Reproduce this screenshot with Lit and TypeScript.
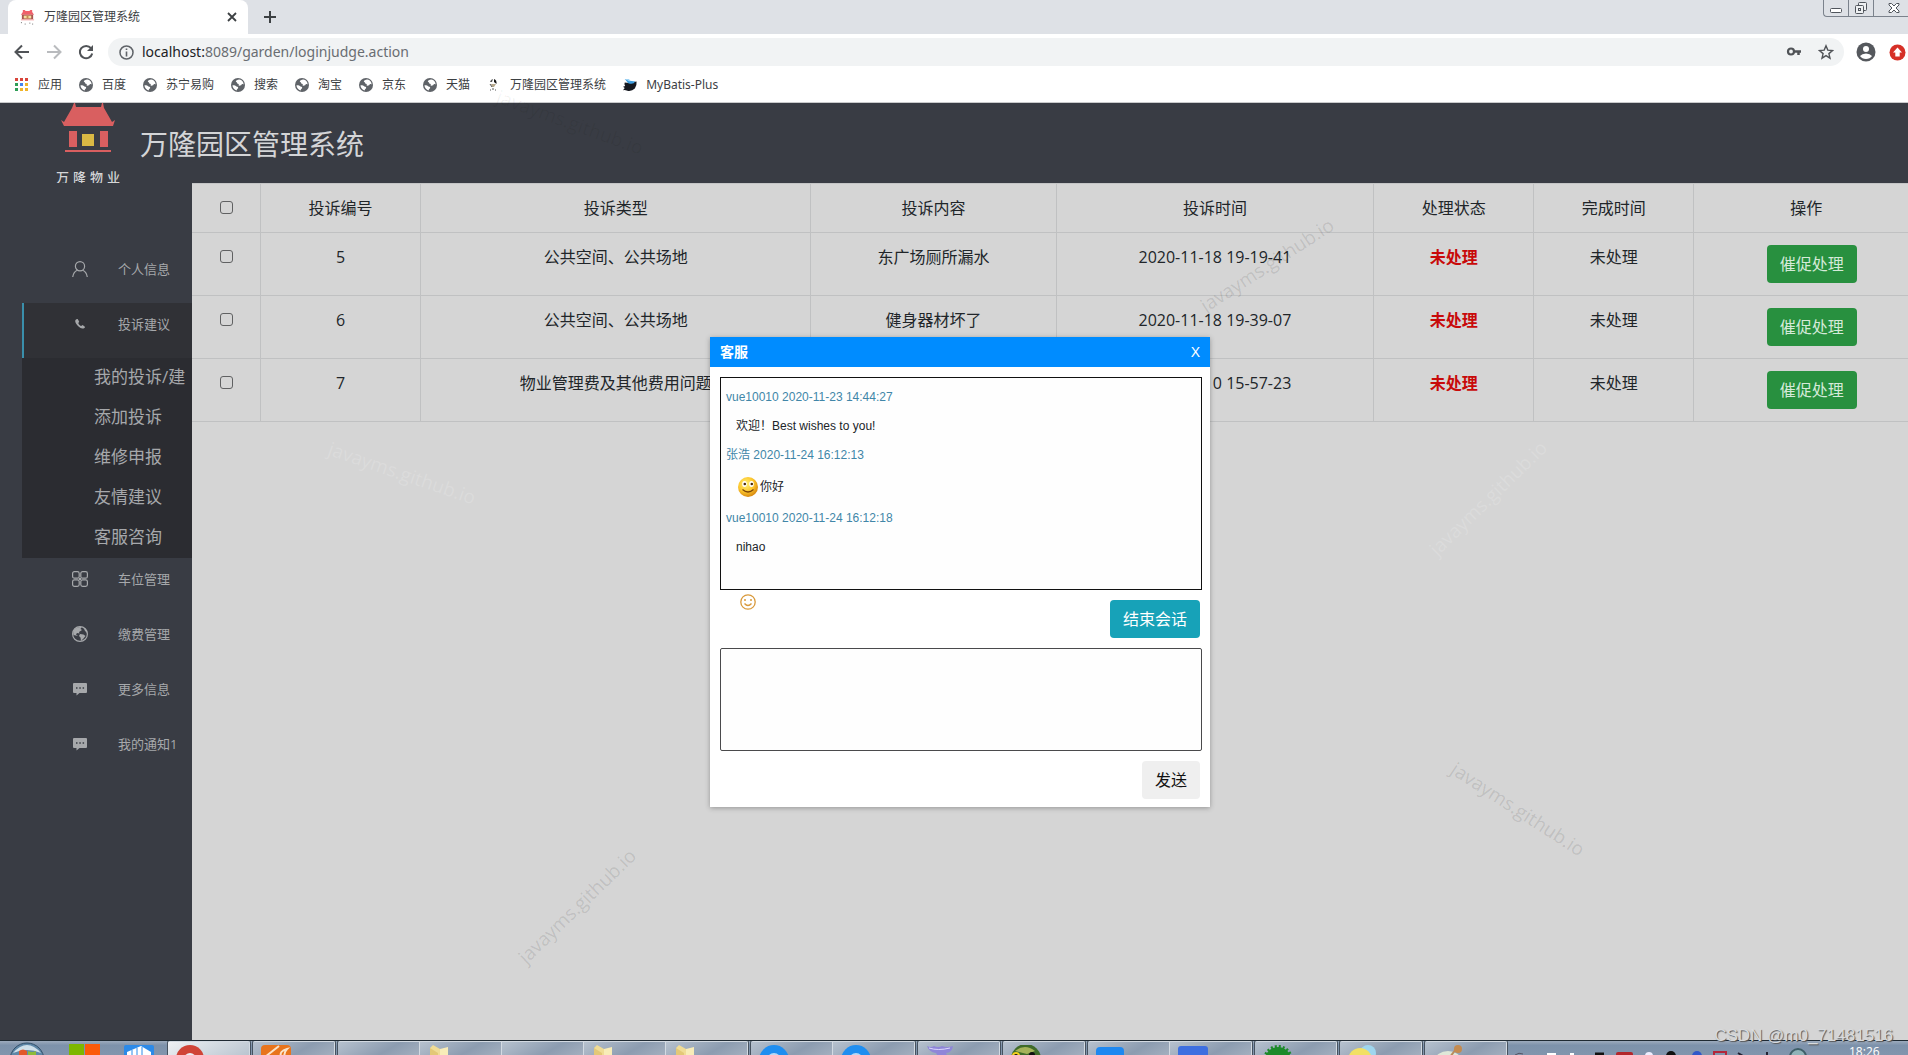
import { LitElement, html, css, svg, nothing } from "lit";
import { customElement } from "lit/decorators.js";
import { classMap } from "lit/directives/class-map.js";

const globe = html`<svg class="ico" viewBox="0 0 16 16" aria-hidden="true">
  <circle cx="8" cy="8" r="8" fill="#5f6368"></circle>
  <path d="M9.500 1.800C7.500 1.700 5.500 3 5.500 4.200C6.500 4.600 7.300 5.200 7 6.200C8.800 6.600 9.700 7.600 8.600 8.800C10.800 9 12 8.500 12.200 7.200C13.300 6.800 14.200 7 14.400 7.600C14.600 4.600 12.500 2.200 9.500 1.800Z" fill="#fff"></path>
  <path d="M1.700 8.300C3.200 8.100 5.500 8.600 6.200 9.800C7.800 9.900 8.600 10.600 8 12C7 12.200 6.700 13 6.500 14.200C3.800 13.500 1.700 11.200 1.700 8.300Z" fill="#fff"></path>
</svg>`;

const favicon = html`<svg class="ico" viewBox="0 0 16 16" aria-hidden="true">
  <path d="M3 0H5L6 1H10L11 0H13V2L15 5H1L3 2Z" fill="#f0606a"></path>
  <rect x="2" y="5" width="12" height="5" fill="#a8564f"></rect>
  <rect x="4" y="6" width="8" height="3" fill="#f3dfa0"></rect>
  <rect x="7" y="6" width="2" height="3" fill="#c98a50"></rect>
  <path d="M1 10.500H15" stroke="#f4a0a0"></path>
  <path d="M1 13.500H2M5 15H6M10 14H11M13 15H14" stroke="#666"></path>
</svg>`;

const appsGrid = html`<svg class="ico" viewBox="0 0 14 14" aria-hidden="true">
  ${["#d9453b", "#d9453b", "#d9453b", "#2f9e57", "#4484ee", "#f0b429", "#2f9e57", "#f0b429", "#f0b429"].map(
    (c, i) => svg`<rect x=${(i % 3) * 5} y=${Math.floor(i / 3) * 5} width="3" height="3" fill=${c}></rect>`
  )}
</svg>`;

const darkMark = html`<svg class="ico" viewBox="0 0 14 14" aria-hidden="true">
  <path d="M4 2L6 1L5 4H3Z" fill="#555"></path>
  <path d="M7 1Q10 2 9.500 6L7 4Z" fill="#1a1a1a"></path>
  <path d="M4 6H9L7 9H5Z" fill="#b7a98c"></path>
  <path d="M3 6L5 9M6 10V12M8 12H9M3 12H4" stroke="#555"></path>
</svg>`;

const bird = html`<svg class="ico" viewBox="0 0 16 16" aria-hidden="true">
  <path d="M2 5Q8 6 15.500 4Q16 9 13.500 12Q10 15.500 5 14.500Q2 13.500 0 14L2 11.500L0 10L2.500 9Q1 7 2 5Z" fill="#15181f"></path>
  <path d="M2 1L8 3L14 4Q12 8 6 6Z" fill="#3f9ee0"></path>
  <path d="M2 1L7 1L8 4Z" fill="#9fd4f5"></path>
</svg>`;

const bookmarks = [
  { icon: appsGrid, label: "应用" },
  { icon: globe, label: "百度" },
  { icon: globe, label: "苏宁易购" },
  { icon: globe, label: "搜索" },
  { icon: globe, label: "淘宝" },
  { icon: globe, label: "京东" },
  { icon: globe, label: "天猫" },
  { icon: darkMark, label: "万隆园区管理系统" },
  { icon: bird, label: "MyBatis-Plus" },
];

const person = html`<svg class="nav-ico" viewBox="0 0 16 16" fill="none" stroke="currentColor" stroke-width="1.200" aria-hidden="true">
  <circle cx="8" cy="5.200" r="4.600"></circle><path d="M0.700 16Q1.500 10.500 5.500 9.200M15.300 16Q14.500 10.500 10.500 9.200"></path></svg>`;
const phone = html`<svg class="nav-ico" viewBox="0 0 16 16" aria-hidden="true">
  <path d="M4.300 3.300C3 4 2.800 5.500 4 7.500C5.500 10 8 12.200 10.300 12.500C11.800 12.700 13 11.800 13.100 10.900L10.700 9.100L9.100 10C7.700 9.500 6.600 8.200 6.300 7L7.200 5.800L5.700 3Z" fill="currentColor"></path></svg>`;
const tiles = html`<svg class="nav-ico" viewBox="0 0 16 16" fill="none" stroke="currentColor" stroke-width="1.200" aria-hidden="true">
  <rect x="0.600" y="0.600" width="6.600" height="6.600" rx="1.800"></rect><rect x="8.800" y="0.600" width="6.600" height="6.600" rx="1.800"></rect>
  <rect x="0.600" y="8.800" width="6.600" height="6.600" rx="1.800"></rect><rect x="8.800" y="8.800" width="6.600" height="6.600" rx="1.800"></rect>
  <path d="M7 7.500H9M7 8.500H9"></path></svg>`;
const earth = html`<svg class="nav-ico" viewBox="0 0 16 16" aria-hidden="true">
  <circle cx="8" cy="8" r="7.400" fill="none" stroke="currentColor" stroke-width="1.200"></circle>
  <path d="M3 3Q5.500 0.500 9.500 1L8.500 3L10 4L7 6L7.500 7.500L5 7L4 8.500L6 10L1.500 9Q0.500 5.500 3 3ZM8 8L11.500 8.500L13.500 10L11.500 12.500L9 15L8.500 11.500L7 10ZM11.500 1.500L13 5L15.400 7Q15 3 11.500 1.500Z" fill="currentColor"></path></svg>`;
const bubble = html`<svg class="nav-ico" viewBox="0 0 16 16" aria-hidden="true">
  <path d="M2 2H14Q15 2 15 3V11Q15 12 14 12H7.500L4.500 14.500V12H2Q1 12 1 11V3Q1 2 2 2Z" fill="currentColor"></path>
  <path d="M4 7H5.500M7.300 7H8.800M10.600 7H12.100" stroke="#393c44" stroke-width="1.500"></path></svg>`;

const menu = [
  { icon: person, label: "个人信息", open: false, sub: [] as string[] },
  { icon: phone, label: "投诉建议", open: true, sub: ["我的投诉/建", "添加投诉", "维修申报", "友情建议", "客服咨询"] },
  { icon: tiles, label: "车位管理", open: false, sub: [] as string[] },
  { icon: earth, label: "缴费管理", open: false, sub: [] as string[] },
  { icon: bubble, label: "更多信息", open: false, sub: [] as string[] },
  { icon: bubble, label: "我的通知1", open: false, sub: [] as string[] },
];

const complaints = [
  { id: 5, kind: "公共空间、公共场地", text: "东广场厕所漏水", time: "2020-11-18 19-19-41" },
  { id: 6, kind: "公共空间、公共场地", text: "健身器材坏了", time: "2020-11-18 19-39-07" },
  { id: 7, kind: "物业管理费及其他费用问题", text: "", time: "2020-11-10 15-57-23" },
];

const messages = [
  { from: "vue10010", at: "2020-11-23 14:44:27", smile: false, text: "欢迎！Best wishes to you!" },
  { from: "张浩", at: "2020-11-24 16:12:13", smile: true, text: "你好" },
  { from: "vue10010", at: "2020-11-24 16:12:18", smile: false, text: "nihao" },
];

const folder = svg`<path d="M2 3L5 0L12 4V16H2Z" fill="#f0dc96"></path><path d="M12 4L20 2V16H12Z" fill="#f8ecb8"></path><path d="M2 3L10 8V16H2Z" fill="#e3c877"></path>`;
const ring = svg`<circle cx="15" cy="15" r="15" fill="#1f8ef0"></circle><circle cx="15" cy="15" r="7" fill="#b9d9f5"></circle>`;
const taskGroups = [
  { lit: true, items: [svg`<circle cx="14" cy="14" r="14" fill="#d04437"></circle><circle cx="14" cy="14" r="6" fill="#e9eef5"></circle>`] },
  { lit: false, items: [svg`<rect width="30" height="30" rx="4" fill="#e8741c"></rect><path d="M4 12L18 1M20 12Q18 6 26 4Q22 8 24 14" stroke="#fbe3c8" stroke-width="2" fill="none"></path>`] },
  { lit: false, items: [svg`<rect x="2" y="11" width="6" height="3" fill="#8a4a35"></rect>`, folder, svg``, folder, folder] },
  { lit: false, items: [ring, ring] },
  { lit: false, items: [svg`<path d="M1 1Q5 3 8 1Q12 3 16 1Q21 3 27 1Q26 8 20 8L24 16H15L10 8Q3 7 1 1Z" fill="#8f86d8"></path><path d="M3 3Q12 6 24 3" stroke="#ddd8ff" fill="none"></path>`] },
  { lit: false, items: [svg`<circle cx="15" cy="14" r="15" fill="#3f6b2a"></circle><path d="M4 6Q14 -2 24 6L16 9Z" fill="#a5b35a"></path><circle cx="5" cy="11" r="4" fill="#f2d21c"></circle><circle cx="5" cy="11" r="2" fill="#111"></circle><circle cx="21" cy="10" r="3" fill="#111"></circle>`] },
  { lit: false, items: [svg`<rect y="2" width="28" height="20" rx="4" fill="#1e88f0"></rect><path d="M5 11H11M15 11H22" stroke="#fff" stroke-width="2"></path>`, svg`<rect y="1" width="30" height="20" rx="3" fill="#3e6fe0"></rect><path d="M5 11H24" stroke="#fff" stroke-width="2" stroke-dasharray="5 2"></path>`] },
  { lit: false, items: [svg`<circle cx="15" cy="15" r="13" fill="#1d8a2a"></circle><circle cx="15" cy="15" r="13.500" fill="none" stroke="#1d8a2a" stroke-width="3" stroke-dasharray="2 2"></circle>`] },
  { lit: false, items: [svg`<circle cx="20" cy="8" r="8" fill="#9fd6ee"></circle><circle cx="12" cy="15" r="12" fill="#f2e064"></circle>`] },
  { lit: false, items: [svg`<ellipse cx="15" cy="15" rx="13" ry="9" fill="#dfe8d8"></ellipse><path d="M17 12L23 4" stroke="#b98b5c" stroke-width="2"></path><circle cx="25" cy="4" r="4" fill="#c48b50"></circle><circle cx="15" cy="13" r="3" fill="#e3d34a"></circle>`] },
];

@customElement("app-root")
export class AppRoot extends LitElement {
  static styles = css`
    :host {
      display: flex;
      flex-direction: column;
      position: relative;
      height: 100vh;
      overflow: hidden;
      font-family: "Open Sans", "Noto Sans CJK SC", sans-serif;
      font-size: 16px;
      line-height: 24px;
      color: #212529;
      background: #d5d5d5;
    }
    * { box-sizing: border-box; }
    button, input, textarea { font: inherit; margin: 0; }
    button { border: 0; padding: 0; background: none; color: inherit; }
    a { color: inherit; text-decoration: none; }
    svg { display: block; flex: none; }
    p, h1, h2, ul { margin: 0; padding: 0; }
    ul { list-style: none; }

    .tabs {
      display: flex;
      align-items: flex-start;
      justify-content: space-between;
      height: 34px;
      padding-left: 8px;
      background: #dee1e6;
      flex: none;
    }
    .tab-list { display: flex; align-items: center; gap: 16px; }
    .tab {
      display: flex;
      align-items: center;
      width: 240px;
      height: 34px;
      padding: 0 11px 0 12px;
      gap: 9px;
      border-radius: 8px 8px 0 0;
      background: #fff;
      font-size: 12px;
      color: #3c4043;
    }
    .tab .ico { width: 15px; height: 15px; }
    .tab-title { flex: 1; }
    .win {
      display: flex;
      height: 17px;
      border: 1px solid #7b828c;
      border-width: 0 0 1px 1px;
      border-radius: 0 0 0 4px;
    }
    .win button { width: 25px; height: 16px; display: grid; place-items: center; border-right: 1px solid #7b828c; }
    .win button:last-child { width: 34px; border-right: 0; padding-left: 6px; }

    .toolbar {
      display: flex;
      align-items: center;
      flex: none;
      height: 36px;
      padding: 0 2px 0 14px;
      background: #fff;
    }
    .nav { display: flex; gap: 16px; margin-right: 14px; }
    .url {
      display: flex;
      align-items: center;
      flex: 1;
      height: 28px;
      padding: 0 10px 0 11px;
      border-radius: 14px;
      background: #f1f3f4;
    }
    .address {
      flex: 1;
      padding-left: 8px;
      font-family: "Noto Sans", "Open Sans", sans-serif;
      font-size: 14px;
      color: #696d72;
    }
    .address b { font-weight: 400; color: #202124; }
    .url-icons { display: flex; gap: 16px; }
    .profile { display: flex; align-items: center; gap: 13px; margin-left: 12px; }

    .bookmarks {
      display: flex;
      align-items: center;
      flex: none;
      gap: 17px;
      height: 33px;
      padding: 0 15px 3px;
      background: #fff;
      border-bottom: 1px solid #c9cacc;
      font-family: "Noto Sans", "Noto Sans CJK SC", sans-serif;
      font-size: 12px;
      color: #3c4043;
    }
    .bookmarks a { display: flex; align-items: center; gap: 9px; }
    .bookmarks .ico { width: 14px; height: 14px; }

    .brand {
      display: flex;
      flex: none;
      height: 80px;
      padding-left: 54px;
      gap: 18px;
      background: #393c44;
      color: #d4d5d7;
    }
    .logo { display: flex; flex-direction: column; align-items: center; width: 68px; }
    .logo-text {
      display: flex;
      justify-content: space-between;
      width: 64px;
      margin-top: 11px;
      font-size: 13px;
      line-height: 24px;
      font-weight: 500;
    }
    .brand h1 { font-size: 28px; font-weight: 400; line-height: 82px; }

    .body { display: flex; flex: 1; min-height: 0; }
    .side {
      flex: none;
      width: 192px;
      padding: 65px 0 0 22px;
      background: #393c44;
      color: #a6a8ab;
      overflow: hidden;
    }
    .item {
      display: flex;
      align-items: flex-start;
      height: 55px;
      padding: 0 0 10px 50px;
      gap: 30px;
      font-size: 13px;
      line-height: 43px;
      white-space: nowrap;
    }
    .item.open { background: #303136; box-shadow: inset 2px 0 #3a8fab; }
    .nav-ico { width: 16px; height: 16px; margin-top: 13px; }
    .sub { background: #2b2c31; padding-left: 72px; font-size: 17px; }
    .sub a { display: block; height: 40px; line-height: 38px; white-space: nowrap; }

    .content { flex: 1; min-width: 0; overflow: hidden; background: #d5d5d5; }
    table {
      width: calc(100% + 11px);
      table-layout: fixed;
      border-spacing: 0;
      border-top: 1px solid #c4c5c6;
      text-align: center;
    }
    th, td {
      padding: 12px 0;
      font-weight: 400;
      vertical-align: top;
      border: 1px solid #c0c1c2;
      border-width: 0 1px 1px 0;
    }
    .c-check { width: 69px; }
    .c-fix { width: 160px; }
    .c-kind { width: 22.6%; }
    .c-text { width: 14.2%; }
    .c-time { width: 18.4%; }
    .check {
      appearance: none;
      display: block;
      width: 13px;
      height: 13px;
      margin: 5px auto 0;
      border: 1px solid #606162;
      border-radius: 3px;
    }
    .bad { color: #c80a0a; font-weight: 700; }
    .btn { height: 38px; padding: 0 13px; border-radius: 4px; }
    .urge { background: #28903f; color: #d5ead9; margin-left: 11px; display: inline-block; vertical-align: top; }

    .dialog {
      position: absolute;
      top: 337px;
      left: calc(50% - 244px);
      width: 500px;
      background: #fff;
      box-shadow: 0 1px 5px rgba(0, 0, 0, 0.3);
    }
    .dialog header {
      display: flex;
      align-items: center;
      justify-content: space-between;
      height: 30px;
      padding: 0 10px;
      background: #008cff;
      color: #fff;
    }
    .dialog h2 { font-size: 14px; font-weight: 700; line-height: 30px; }
    .dialog header button { font-family: "Liberation Sans", sans-serif; font-size: 14px; }
    .chat { display: flex; flex-direction: column; padding: 10px 8px 8px 10px; }
    .log {
      display: flex;
      flex-direction: column;
      gap: 11px;
      height: 213px;
      padding: 10px 5px;
      border: 1px solid #111;
      font-family: "Liberation Sans", "Noto Sans CJK SC", sans-serif;
      font-size: 12px;
      line-height: 18px;
      background: #fefefe;
    }
    .meta { color: #4186a8; }
    .msg { display: flex; align-items: center; padding-left: 10px; }
    .actions { display: flex; justify-content: space-between; align-items: flex-start; padding: 4px 2px 0 20px; }
    .emoji { display: grid; width: 16px; height: 16px; }
    .end { margin-top: 6px; background: #17a2b8; color: #fff; }
    textarea {
      display: block;
      height: 103px;
      margin: 10px 0;
      border: 1px solid #4a4a4c;
      border-radius: 2px;
      background: #fefefe;
      resize: none;
    }
    .send { align-self: flex-end; margin-right: 2px; background: #efefef; color: #111; }

    .taskbar {
      display: flex;
      flex: none;
      height: 15px;
      overflow: hidden;
      border-top: 1px solid #1f2a33;
      background: linear-gradient(#9dabbd, #7d92ab 30%, #8295ad);
    }
    .launch { width: 168px; flex: none; }
    .groups { display: flex; gap: 3px; }
    .group { display: flex; box-shadow: 0 0 0 1px #46525f; border-radius: 2px 2px 0 0; overflow: hidden; }
    .task {
      width: 82px;
      height: 15px;
      padding: 3px 0 0 8px;
      border: 1px solid #d3dae2;
      border-width: 1px 1px 0 0;
      background: linear-gradient(150deg, #b6c1ce, #8c9cb0 60%, #a4b0bf);
    }
    .task.lit { background: linear-gradient(150deg, #eef1f4, #b9c4cf); }
    .tray {
      display: flex;
      flex: 1;
      justify-content: flex-end;
      padding-right: 32px;
      gap: 42px;
      color: #fff;
      font-size: 12px;
      line-height: 21px;
    }

    .mark {
      position: absolute;
      width: 160px;
      margin: -14px 0 0 -80px;
      text-align: center;
      font-size: 19px;
      line-height: 28px;
      color: rgba(0, 0, 0, 0.11);
      pointer-events: none;
    }
    .mark.light { color: rgba(255, 255, 255, 0.16); }
    .m1 { top: 122px; left: 570px; transform: rotate(20deg); }
    .mark.m1 { color: rgba(0, 0, 0, 0.06); }
    .m2 { top: 265px; left: 1267px; transform: rotate(-33deg); }
    .m3 { top: 473px; left: 402px; transform: rotate(19deg); }
    .m4 { top: 498px; left: 1488px; transform: rotate(-44deg); }
    .m5 { top: 809px; left: 1518px; transform: rotate(33deg); }
    .m6 { top: 906px; left: 577px; transform: rotate(-44deg); }
    .csdn {
      position: absolute;
      right: 15px;
      bottom: 7px;
      font-family: "Liberation Sans", sans-serif;
      font-size: 17px;
      color: #d9dbdd;
      text-shadow: 1px 1px 1px #555;
      pointer-events: none;
    }
  `;

  private browser() {
    return html`
      <div class="tabs">
        <div class="tab-list">
          <div class="tab">
            ${favicon}<span class="tab-title">万隆园区管理系统</span>
            <button aria-label="关闭标签页">
              <svg width="10" height="10" viewBox="0 0 10 10" stroke="#3c4043" stroke-width="1.800"><path d="M1 1L9 9M9 1L1 9"></path></svg>
            </button>
          </div>
          <button aria-label="新标签页">
            <svg width="12" height="12" viewBox="0 0 12 12" stroke="#3c4043" stroke-width="2"><path d="M6 0V12M0 6H12"></path></svg>
          </button>
        </div>
        <div class="win">
          <button aria-label="最小化">
            <svg width="14" height="14" viewBox="0 0 14 14" fill="#fff" stroke="#50555c"><rect x="1.500" y="7.500" width="11" height="4" rx="1"></rect></svg>
          </button>
          <button aria-label="还原">
            <svg width="14" height="14" viewBox="0 0 14 14" fill="#eef0f2" stroke="#50555c"><rect x="4.500" y="1.500" width="8" height="8" rx="1"></rect><rect x="1.500" y="4.500" width="8" height="8" rx="1"></rect><rect x="4.500" y="7.500" width="2" height="2"></rect></svg>
          </button>
          <button aria-label="关闭">
            <svg width="12" height="12" viewBox="0 0 12 12" fill="#fff" stroke="#50555c"><path d="M1 1.500H3.500L6 4L8.500 1.500H11V3L8 6L11 9V10.500H8.500L6 8L3.500 10.500H1V9L4 6L1 3Z"></path></svg>
          </button>
        </div>
      </div>
      <div class="toolbar">
        <div class="nav">
          <button aria-label="后退"><svg width="16" height="16" viewBox="0 0 16 16" fill="none" stroke="#505357" stroke-width="2"><path d="M15 8H2M8 1.500L1.500 8L8 14.500"></path></svg></button>
          <button aria-label="前进"><svg width="16" height="16" viewBox="0 0 16 16" fill="none" stroke="#b9bbbe" stroke-width="2"><path d="M1 8H14M8 1.500L14.500 8L8 14.500"></path></svg></button>
          <button aria-label="刷新"><svg width="16" height="16" viewBox="0 0 16 16"><path d="M13 4.200A6.200 6.200 0 1 0 14.200 9.500" fill="none" stroke="#505357" stroke-width="2"></path><path d="M15 1V7H9Z" fill="#505357"></path></svg></button>
        </div>
        <div class="url">
          <svg width="15" height="15" viewBox="0 0 15 15" fill="none" stroke="#5f6368"><circle cx="7.500" cy="7.500" r="6.500" stroke-width="1.500"></circle><path d="M7.500 3.500V5M7.500 6.500V11.500" stroke-width="1.600"></path></svg>
          <a class="address" href="#"><b>localhost:</b>8089/garden/loginjudge.action</a>
          <div class="url-icons">
            <button aria-label="密码"><svg width="16" height="16" viewBox="0 0 16 16" fill="none" stroke="#505357"><circle cx="5" cy="7.500" r="3" stroke-width="2.200"></circle><path d="M8 7.500H15M12.500 7.500V11" stroke-width="2.500"></path></svg></button>
            <button aria-label="收藏"><svg width="16" height="16" viewBox="0 0 16 16" fill="none" stroke="#505357" stroke-width="1.400"><path d="M8 1.800L9.800 6.100L14.500 6.500L10.900 9.600L12 14.200L8 11.700L4 14.200L5.100 9.600L1.500 6.500L6.200 6.100Z"></path></svg></button>
          </div>
        </div>
        <div class="profile">
          <button aria-label="账号"><svg width="20" height="20" viewBox="0 0 20 20"><circle cx="10" cy="10" r="9.500" fill="#55585d"></circle><circle cx="10" cy="7" r="3" fill="#fff"></circle><path d="M4 14Q6 11.500 10 11.500T16 14Q14 17 10 17T4 14Z" fill="#fff"></path></svg></button>
          <button aria-label="更新"><svg width="17" height="17" viewBox="0 0 17 17"><circle cx="8.500" cy="8.500" r="8" fill="#d63027"></circle><path d="M8.500 3.500L13 8.500H10.700V12.500H6.300V8.500H4Z" fill="#fff"></path></svg></button>
        </div>
      </div>
      <nav class="bookmarks">${bookmarks.map((b) => html`<a href="#">${b.icon}<span>${b.label}</span></a>`)}</nav>
    `;
  }

  private table() {
    return html`<table>
      <colgroup>
        <col class="c-check" /><col class="c-fix" /><col class="c-kind" /><col class="c-text" />
        <col class="c-time" /><col class="c-fix" /><col class="c-fix" /><col />
      </colgroup>
      <thead>
        <tr>
          <th><input class="check" type="checkbox" aria-label="全选" /></th>
          ${["投诉编号", "投诉类型", "投诉内容", "投诉时间", "处理状态", "完成时间", "操作"].map((t) => html`<th>${t}</th>`)}
        </tr>
      </thead>
      <tbody>
        ${complaints.map(
          (c) => html`<tr>
            <td><input class="check" type="checkbox" aria-label=${`选择 ${c.id}`} /></td>
            <td>${c.id}</td>
            <td>${c.kind}</td>
            <td>${c.text}</td>
            <td>${c.time}</td>
            <td class="bad">未处理</td>
            <td>未处理</td>
            <td><button class="btn urge">催促处理</button></td>
          </tr>`
        )}
      </tbody>
    </table>`;
  }

  private chat() {
    return html`<section class="dialog" role="dialog" aria-labelledby="chat-title">
      <header><h2 id="chat-title">客服</h2><button aria-label="关闭">X</button></header>
      <div class="chat">
        <div class="log">
          ${messages.map(
            (m) => html`<p class="meta">${m.from} ${m.at}</p>
              <p class="msg">
                ${m.smile
                  ? html`<svg width="24" height="23" viewBox="0 0 24 23" role="img" aria-label="微笑">
                      <defs><radialGradient id="face" cx="0.4" cy="0.35" r="0.65"><stop offset="0" stop-color="#fff27a"></stop><stop offset="0.6" stop-color="#fcc62c"></stop><stop offset="1" stop-color="#d98a10"></stop></radialGradient></defs>
                      <circle cx="12" cy="12" r="10" fill="url(#face)"></circle>
                      <ellipse cx="8.500" cy="9" rx="2.300" ry="3" fill="#fff"></ellipse><ellipse cx="15.500" cy="9" rx="2.300" ry="3" fill="#fff"></ellipse>
                      <circle cx="8.800" cy="9" r="1.300" fill="#4a2b08"></circle><circle cx="15.800" cy="9" r="1.300" fill="#4a2b08"></circle>
                      <path d="M6.500 14.500Q12 19.500 17.500 14.500" fill="none" stroke="#7c4508" stroke-width="1.200"></path>
                    </svg>`
                  : nothing}<span>${m.text}</span>
              </p>`
          )}
        </div>
        <div class="actions">
          <button class="emoji" aria-label="表情">
            <svg width="16" height="16" viewBox="0 0 16 16" fill="none" stroke="#d99a3c"><circle cx="8" cy="8" r="7.200" stroke-width="1.300"></circle><path d="M4.500 9.500Q8 13.500 11.500 9.500" stroke-width="1.300"></path><path d="M5 5V7M11 5V7" stroke-width="1.500"></path></svg>
          </button>
          <button class="btn end">结束会话</button>
        </div>
        <textarea aria-label="消息"></textarea>
        <button class="btn send">发送</button>
      </div>
    </section>`;
  }

  private taskbar() {
    return html`<footer class="taskbar">
      <svg class="launch" width="168" height="15" viewBox="0 0 168 15" aria-hidden="true">
        <circle cx="27" cy="19" r="17" fill="#5f88a8" stroke="#33506a"></circle>
        <path d="M13 12Q27 -4 41 12Q27 6 13 12Z" fill="#cfe0ea"></path>
        <path d="M19 15V10Q23 7 27 10V15Z" fill="#e2582a"></path><path d="M28 10Q32 12 36 10V15H28Z" fill="#8dbb3a"></path>
        <rect x="69" y="3" width="15" height="12" fill="#7db700"></rect><rect x="85" y="3" width="15" height="12" fill="#fb5a0a"></rect>
        <rect x="124" y="4" width="30" height="14" rx="2" fill="#2b8ae8"></rect><path d="M127 15V11L141 5L151 11V15Z" fill="#fff"></path><path d="M132 9V15M137 7V15M142 6V15" stroke="#2b8ae8"></path>
      </svg>
      <div class="groups">
        ${taskGroups.map(
          (g) => html`<div class="group">
            ${g.items.map((i) => html`<div class=${classMap({ task: true, lit: g.lit })}><svg width="32" height="16" viewBox="0 0 32 16" aria-hidden="true">${i}</svg></div>`)}
          </div>`
        )}
      </div>
      <div class="tray">
        <svg width="300" height="15" viewBox="0 0 300 15" aria-hidden="true">
          <path d="M8 14Q12 11 16 13" stroke="#556" fill="none"></path><path d="M40 13H49M63 13H67" stroke="#fff" stroke-width="2"></path>
          <path d="M88 13H97" stroke="#111" stroke-width="3"></path><rect x="109" y="11" width="17" height="5" rx="2" fill="#b3262b"></rect>
          <circle cx="142" cy="15" r="4" fill="#eef"></circle><circle cx="164" cy="15" r="5" fill="#111"></circle>
          <circle cx="190" cy="15" r="5" fill="#3158c9"></circle><rect x="207" y="11" width="12" height="6" fill="none" stroke="#b2263a" stroke-width="2"></rect>
          <path d="M231 12L236 15M260 11V15" stroke="#223" stroke-width="2"></path>
          <circle cx="291" cy="16" r="8" fill="#8fb3b8" stroke="#3f5f68" stroke-width="2"></circle>
        </svg>
        <time>18:26</time>
      </div>
    </footer>`;
  }

  render() {
    return html`
      ${this.browser()}
      <header class="brand">
        <div class="logo">
          <svg width="56" height="51" viewBox="0 0 56 51" aria-hidden="true">
            <path d="M14 0H15L16 4H41L42 0H43L44 5L52 19L55 17L53 23H4L1 17L4 19L12 5Z" fill="#d95f60"></path>
            <rect x="9" y="28" width="8" height="16" fill="#d95f60"></rect><rect x="40" y="28" width="8" height="16" fill="#d95f60"></rect>
            <rect x="22" y="31" width="12" height="12" fill="#d9b944"></rect>
            <rect x="5" y="47" width="46" height="2" fill="#d95f60"></rect>
          </svg>
          <div class="logo-text"><span>万</span><span>隆</span><span>物</span><span>业</span></div>
        </div>
        <h1>万隆园区管理系统</h1>
      </header>
      <div class="body">
        <nav class="side">
          ${menu.map(
            (m) => html`<a href="#" class=${classMap({ item: true, open: m.open })}>${m.icon}<span>${m.label}</span></a>
              ${m.sub.length ? html`<ul class="sub">${m.sub.map((s) => html`<li><a href="#">${s}</a></li>`)}</ul>` : nothing}`
          )}
        </nav>
        <main class="content">${this.table()}</main>
      </div>
      ${this.taskbar()}
      ${["m1", "m2", "m3 light", "m4 light", "m5", "m6"].map((m) => html`<span class="mark ${m}">javayms.github.io</span>`)}
      ${this.chat()}
      <span class="csdn">CSDN @m0_71481516</span>
    `;
  }
}
